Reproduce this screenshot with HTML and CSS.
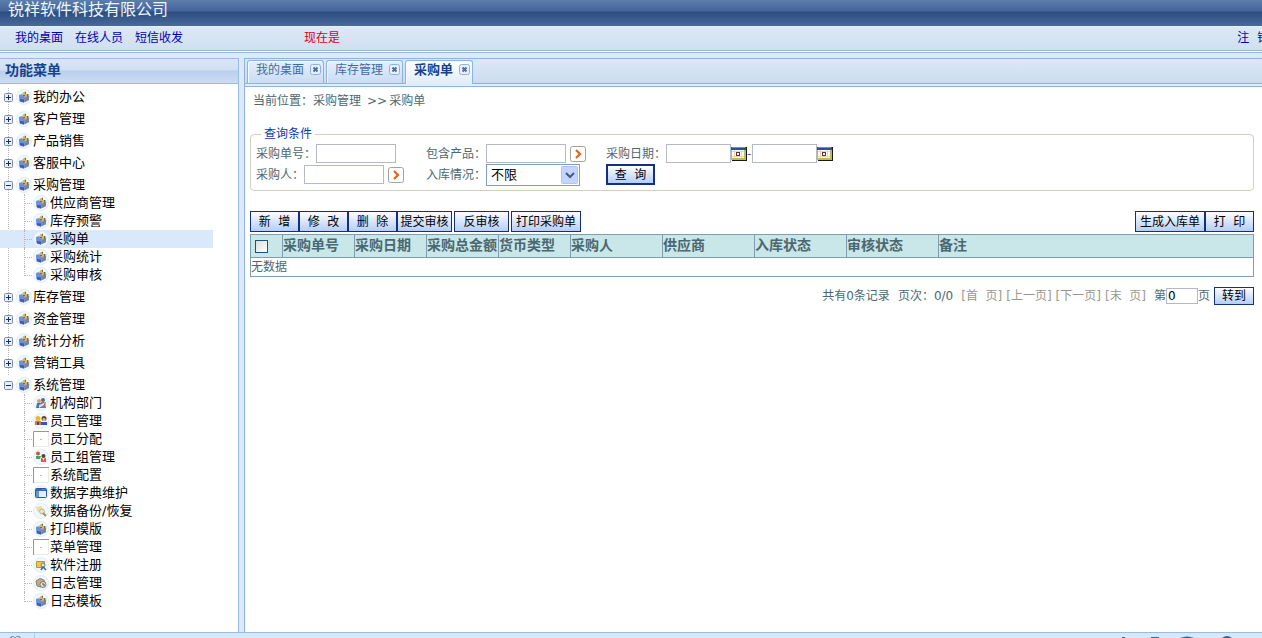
FILE: index.html
```html
<!DOCTYPE html>
<html lang="zh-CN">
<head>
<meta charset="utf-8">
<title>锐祥软件科技有限公司</title>
<link rel="stylesheet" href="styles.css">
</head>
<body>
<svg class="sprite" aria-hidden="true">
  <symbol id="folder" viewBox="0 0 16 16">
    <circle cx="8" cy="8" r="7.500" fill="#f0f8fe" stroke="#dceefb"/>
    <path d="M3 6l3-1 1 1 6-1v6l-5 2.500-4-.5z" fill="#8390b5"/>
    <path d="M3 6l5 1v6.500L3.500 12z" fill="#6f8fd6"/>
    <path d="M4 10l4 .5v3L4 12z" fill="#3f59ad"/>
    <path d="M7 3.500L9 2.500h1V5h3l.5 3L12 9V7h-1l-1 2-2-2-2-1z" fill="#cdb768"/>
    <path d="M9 3h1v2H9zM11 5h1v4h-1zM7 6h2v1H7z" fill="#756a52"/>
    <path d="M9 9l4-2v4l-4 2z" fill="#7883a8"/>
  </symbol>
  <symbol id="plus" viewBox="0 0 9 9">
    <rect x=".5" y=".5" width="8" height="8" rx="1" fill="#e9edf4" stroke="#7b8ba8"/>
    <path d="M2 4.500h5M4.500 2v5" stroke="#1c2f59"/>
  </symbol>
  <symbol id="minus" viewBox="0 0 9 9">
    <rect x=".5" y=".5" width="8" height="8" rx="1" fill="#e9edf4" stroke="#7b8ba8"/>
    <path d="M2 4.500h5" stroke="#1c2f59"/>
  </symbol>
  <symbol id="blank" viewBox="0 0 16 16">
    <path d="M0 0h16v16H0z" fill="#fff"/>
    <path d="M.5 16V.5H16" fill="none" stroke="#9a988c"/>
    <path d="M1 15.500h14.500V1" fill="none" stroke="#ece9df"/>
    <path d="M7 8h2v1H7z" fill="#bbb"/>
  </symbol>
  <symbol id="dept" viewBox="0 0 16 16">
    <circle cx="8" cy="8" r="7.500" fill="#f0f8fe" stroke="#dceefb"/>
    <path d="M4 8h5v5H3z" fill="#4870bd"/><circle cx="6" cy="6" r="2" fill="#d3a060"/>
    <path d="M8 7h4l1 6H8z" fill="#8a7185"/><circle cx="10" cy="5" r="2" fill="#5b688c"/>
    <path d="M6 10l5-2v2l-5 3z" fill="#dbe1ed"/><path d="M11 7h2v2h-2z" fill="#d8a04c"/>
  </symbol>
  <symbol id="staff" viewBox="0 0 16 16">
    <circle cx="8" cy="8" r="7.500" fill="#f0f8fe" stroke="#dceefb"/>
    <circle cx="5" cy="5.500" r="2.500" fill="#efb92b"/><path d="M2 8h6v4H2z" fill="#d38325"/>
    <circle cx="11" cy="5.500" r="2.500" fill="#5f472f"/><circle cx="11" cy="6.500" r="1.500" fill="#e8bd84"/>
    <path d="M8 9h6v3H8z" fill="#2f56ba"/><path d="M4 9h2v3H4z" fill="#414a8c"/>
  </symbol>
  <symbol id="group" viewBox="0 0 16 16">
    <circle cx="8" cy="8" r="7.500" fill="#f0f8fe" stroke="#dceefb"/>
    <circle cx="5" cy="4.500" r="2" fill="#d9503b"/><path d="M3 7h5l-1 3H3z" fill="#45a35d"/>
    <circle cx="10.500" cy="7" r="2" fill="#564339"/><path d="M8 9h5v4H8z" fill="#dc5549"/>
    <path d="M9.500 9h2l-1 3z" fill="#fff"/>
  </symbol>
  <symbol id="window" viewBox="0 0 16 16">
    <circle cx="8" cy="8" r="7.500" fill="#f0f8fe" stroke="#dceefb"/>
    <rect x="2.500" y="3.500" width="11" height="9" rx="1" fill="#e5effb" stroke="#31539b"/>
    <path d="M3 4h10v2H3z" fill="#3f67b5"/><path d="M9 4h3v1H9z" fill="#d5665a"/><path d="M3 6h3v6H3z" fill="#6f92d3"/>
  </symbol>
  <symbol id="backup" viewBox="0 0 16 16">
    <circle cx="8" cy="8" r="7.500" fill="#f0f8fe" stroke="#dceefb"/>
    <path d="M3 4l5-1 3 4-3 3-4-2z" fill="#efdc9c"/><circle cx="9" cy="8.500" r="2.500" fill="#e7e3d5" stroke="#bdb59b"/>
    <path d="M10 10l3 3" stroke="#b98c4c" stroke-width="2"/>
  </symbol>
  <symbol id="register" viewBox="0 0 16 16">
    <circle cx="8" cy="8" r="7.500" fill="#f0f8fe" stroke="#dceefb"/>
    <path d="M3.500 4.500h8v6h-8z" fill="#ecca3b" stroke="#b8982c"/><circle cx="10" cy="8" r="2" fill="#dce7f3" stroke="#607ba5"/>
    <path d="M10 10l3 3M10 10l-2 3" stroke="#41669c" stroke-width="1.500"/>
  </symbol>
  <symbol id="log" viewBox="0 0 16 16">
    <circle cx="8" cy="8" r="7.500" fill="#f0f8fe" stroke="#dceefb"/>
    <path d="M3 6l4-2.500L11 5l1 3-4 4-4-1z" fill="#c3ad83" stroke="#8c7f69"/>
    <circle cx="10" cy="9.500" r="3" fill="#ece7d9" stroke="#77736d"/><path d="M10 8v2h2" fill="none" stroke="#484848"/>
  </symbol>
  <symbol id="close" viewBox="0 0 11 11">
    <rect x=".5" y=".5" width="10" height="10" rx="2" fill="#e7f0fb" stroke="#91b0d9"/>
    <path d="M3.500 3.500l4 4M7.500 3.500l-4 4" stroke="#4c6f9f" stroke-width="2"/>
  </symbol>
  <symbol id="pick" viewBox="0 0 16 16">
    <rect x=".5" y=".5" width="15" height="15" rx="2" fill="#fff" stroke="#a9a396"/>
    <path d="M6 4l4 4-4 4" fill="none" stroke="#e5621c" stroke-width="2.200"/>
  </symbol>
  <symbol id="calendar" viewBox="0 0 16 16">
    <path d="M1 1h15v14H1z" fill="#1a1a12"/>
    <path d="M0 1h15v13H0z" fill="#c4b95a"/>
    <path d="M1 4h12v8H1z" fill="#fffdf0"/>
    <path d="M0 1h15v3H0z" fill="#27519f"/><path d="M1 1h13v1H1z" fill="#6a8fd0"/>
    <path d="M3.500 4v8M10.500 4v8M1 5.500h12M1 10.500h12" stroke="#ead9ac"/>
    <rect x="5.500" y="6.500" width="3" height="3" fill="#fff" stroke="#7b2741"/>
  </symbol>
</svg>

<header class="banner"><h1 class="banner-title">锐祥软件科技有限公司</h1></header>
<nav class="topnav">
  <a href="#">我的桌面</a>
  <a href="#">在线人员</a>
  <a href="#">短信收发</a>
  <span class="clock">现在是</span>
  <a class="logout" href="#">注&nbsp; 销</a>
</nav>

<div class="workspace">
  <aside class="sidebar">
    <h2 class="sidebar-title">功能菜单</h2>
    <ul class="tree">
      <li><a class="node" href="#"><svg class="toggle"><use href="#plus"/></svg><svg class="icon"><use href="#folder"/></svg>我的办公</a></li>
      <li><a class="node" href="#"><svg class="toggle"><use href="#plus"/></svg><svg class="icon"><use href="#folder"/></svg>客户管理</a></li>
      <li><a class="node" href="#"><svg class="toggle"><use href="#plus"/></svg><svg class="icon"><use href="#folder"/></svg>产品销售</a></li>
      <li><a class="node" href="#"><svg class="toggle"><use href="#plus"/></svg><svg class="icon"><use href="#folder"/></svg>客服中心</a></li>
      <li><a class="node" href="#"><svg class="toggle"><use href="#minus"/></svg><svg class="icon"><use href="#folder"/></svg>采购管理</a>
        <ul class="branch">
          <li><a class="leaf" href="#"><svg class="icon"><use href="#folder"/></svg>供应商管理</a></li>
          <li><a class="leaf" href="#"><svg class="icon"><use href="#folder"/></svg>库存预警</a></li>
          <li><a class="leaf selected" href="#"><svg class="icon"><use href="#folder"/></svg>采购单</a></li>
          <li><a class="leaf" href="#"><svg class="icon"><use href="#folder"/></svg>采购统计</a></li>
          <li><a class="leaf" href="#"><svg class="icon"><use href="#folder"/></svg>采购审核</a></li>
        </ul>
      </li>
      <li><a class="node" href="#"><svg class="toggle"><use href="#plus"/></svg><svg class="icon"><use href="#folder"/></svg>库存管理</a></li>
      <li><a class="node" href="#"><svg class="toggle"><use href="#plus"/></svg><svg class="icon"><use href="#folder"/></svg>资金管理</a></li>
      <li><a class="node" href="#"><svg class="toggle"><use href="#plus"/></svg><svg class="icon"><use href="#folder"/></svg>统计分析</a></li>
      <li><a class="node" href="#"><svg class="toggle"><use href="#plus"/></svg><svg class="icon"><use href="#folder"/></svg>营销工具</a></li>
      <li><a class="node" href="#"><svg class="toggle"><use href="#minus"/></svg><svg class="icon"><use href="#folder"/></svg>系统管理</a>
        <ul class="branch">
          <li><a class="leaf" href="#"><svg class="icon"><use href="#dept"/></svg>机构部门</a></li>
          <li><a class="leaf" href="#"><svg class="icon"><use href="#staff"/></svg>员工管理</a></li>
          <li><a class="leaf" href="#"><svg class="icon"><use href="#blank"/></svg>员工分配</a></li>
          <li><a class="leaf" href="#"><svg class="icon"><use href="#group"/></svg>员工组管理</a></li>
          <li><a class="leaf" href="#"><svg class="icon"><use href="#blank"/></svg>系统配置</a></li>
          <li><a class="leaf" href="#"><svg class="icon"><use href="#window"/></svg>数据字典维护</a></li>
          <li><a class="leaf" href="#"><svg class="icon"><use href="#backup"/></svg>数据备份/恢复</a></li>
          <li><a class="leaf" href="#"><svg class="icon"><use href="#folder"/></svg>打印模版</a></li>
          <li><a class="leaf" href="#"><svg class="icon"><use href="#blank"/></svg>菜单管理</a></li>
          <li><a class="leaf" href="#"><svg class="icon"><use href="#register"/></svg>软件注册</a></li>
          <li><a class="leaf" href="#"><svg class="icon"><use href="#log"/></svg>日志管理</a></li>
          <li><a class="leaf" href="#"><svg class="icon"><use href="#folder"/></svg>日志模板</a></li>
        </ul>
      </li>
    </ul>
  </aside>

  <main class="main">
    <div class="tabs">
      <div class="tab"><a href="#">我的桌面</a><button class="tab-close" type="button" aria-label="关闭"><svg><use href="#close"/></svg></button></div>
      <div class="tab"><a href="#">库存管理</a><button class="tab-close" type="button" aria-label="关闭"><svg><use href="#close"/></svg></button></div>
      <div class="tab active"><a href="#">采购单</a><button class="tab-close" type="button" aria-label="关闭"><svg><use href="#close"/></svg></button></div>
    </div>
    <div class="content">
      <div class="crumbs"><span>当前位置<span class="colon">：</span>采购管理</span><span>&gt;&gt;</span><span class="here">采购单</span></div>

      <form>
        <fieldset class="query">
          <legend>查询条件</legend>
          <div class="fields">
            <div class="field"><label for="no">采购单号<span class="colon">：</span></label><input class="text" id="no" type="text"></div>
            <div class="field"><label for="product">包含产品<span class="colon">：</span></label><input class="text" id="product" type="text"><button class="pick" type="button" aria-label="选择产品"><svg><use href="#pick"/></svg></button></div>
            <div class="field"><label for="from">采购日期<span class="colon">：</span></label><input class="text date" id="from" type="text"><button class="cal" type="button" aria-label="选择开始日期"><svg><use href="#calendar"/></svg></button><span class="dash">-</span><input class="text date" type="text" aria-label="结束日期"><button class="cal" type="button" aria-label="选择结束日期"><svg><use href="#calendar"/></svg></button></div>
            <div class="field"><label for="buyer">采购人<span class="colon">：</span></label><input class="text" id="buyer" type="text"><button class="pick" type="button" aria-label="选择采购人"><svg><use href="#pick"/></svg></button></div>
            <div class="field"><label for="stock">入库情况<span class="colon">：</span></label><span class="select-wrap"><select id="stock"><option>不限</option></select><svg class="select-arrow" viewBox="0 0 17 18"><rect x=".5" y=".5" width="16" height="17" rx="1" fill="#c3d5fc" stroke="#aec4f2"/><path d="M5 7l4 4 4-4" fill="none" stroke="#42598e" stroke-width="2"/></svg></span></div>
            <div class="field"><button class="btn search" type="button">查&nbsp; 询</button></div>
          </div>
        </fieldset>
      </form>

      <div class="toolbar">
        <button class="btn short" type="button">新&nbsp; 增</button>
        <button class="btn short" type="button">修&nbsp; 改</button>
        <button class="btn short" type="button">删&nbsp; 除</button>
        <button class="btn medium" type="button">提交审核</button>
        <button class="btn medium spaced" type="button">反审核</button>
        <button class="btn long spaced" type="button">打印采购单</button>
        <button class="btn long push" type="button">生成入库单</button>
        <button class="btn short" type="button">打&nbsp; 印</button>
      </div>

      <table class="grid">
        <colgroup><col class="c-check"><col class="c-a"><col class="c-a"><col class="c-a"><col class="c-a"><col class="c-b"><col class="c-b"><col class="c-b"><col class="c-b"><col></colgroup>
        <thead><tr><th class="check"><input type="checkbox" aria-label="全选"></th><th>采购单号</th><th>采购日期</th><th>采购总金额</th><th>货币类型</th><th>采购人</th><th>供应商</th><th>入库状态</th><th>审核状态</th><th>备注</th></tr></thead>
        <tbody><tr><td colspan="10">无数据</td></tr></tbody>
      </table>

      <div class="pager">
        <span class="total">共有0条记录</span>
        <span class="total">页次<span class="colon">：</span>0/0</span>
        <a href="#">[首&nbsp; 页]</a>
        <a href="#">[上一页]</a>
        <a href="#">[下一页]</a>
        <a href="#">[末&nbsp; 页]</a>
        <span class="goto"><label for="page">第</label><input class="text page" id="page" type="text" value="0">页</span>
        <button class="btn go" type="button">转到</button>
      </div>
    </div>
  </main>
</div>

<footer class="status">
  <svg class="status-left" viewBox="0 0 34 5"><path d="M11 3h3v1h-3zM16 3h4v1h-4zM10 4h2v1h-2zM14 4h2v1h-2zM19 4h2v1h-2z" fill="#7f98b8"/></svg>
  <svg class="status-right" viewBox="0 0 144 5"><path d="M4 4h3v1H4zM33 4h8v1h-8zM62 5q7-3 14 0zM104 5q5-4 10 0z" fill="#3f6297"/></svg>
</footer>
</body>
</html>
```

FILE: styles.css
```css
* { box-sizing: border-box; }

body {
  display: flex;
  flex-direction: column;
  height: 100vh;
  margin: 0;
  overflow: hidden;
  background: #dfe8f6;
  color: #4b6870;
  font: 12px/18px "DejaVu Sans", "Noto Sans CJK SC", sans-serif;
}

a { color: inherit; text-decoration: none; }
ul { margin: 0; padding: 0; list-style: none; }
svg { display: block; flex: none; }
button, input, select { font: inherit; }
button { flex: none; padding: 0; white-space: nowrap; }
.sprite { position: absolute; width: 0; height: 0; }
.colon { font-family: "Noto Sans CJK TC", sans-serif; line-height: 1; }

/* Banner and top links */
.banner {
  flex: none;
  height: 26px;
  padding: 0 8px;
  background: linear-gradient(#5d7dac, #43659a 11px, #2c4d80 12px, #49699a);
}
.banner-title { margin: 0; color: #eef7fb; font-size: 16px; font-weight: 400; line-height: 20px; }

.topnav {
  display: flex;
  flex: none;
  align-items: center;
  gap: 12px;
  height: 27px;
  padding: 0 0 3px 15px;
  overflow: hidden;
  border-top: 1px solid #e6f0fa;
  border-bottom: 1px solid #99b4da;
  background: linear-gradient(#dce8f5, #d0dff0 23px, #99b4da 23px, #99b4da 24px, #fff 24px);
  color: #0000b4;
  white-space: nowrap;
}
.clock { margin-left: 109px; color: #e00010; }
.logout { margin: 0 -7px 0 auto; }

/* Sidebar */
.workspace { display: flex; flex: 1; gap: 5px; min-height: 0; padding-top: 5px; }
.sidebar {
  display: flex;
  flex: none;
  flex-direction: column;
  width: 239px;
  border: solid #99bbe8;
  border-width: 1px 1px 0 0;
  background: #fff;
}
.sidebar-title {
  flex: none;
  height: 25px;
  margin: 0;
  padding-left: 5px;
  border-bottom: 1px solid #99bbe8;
  background: linear-gradient(#dae7f6, #cfdff3 11px, #b9cfee 12px, #ccddf3);
  color: #15428b;
  font-size: 14px;
  line-height: 22px;
}
.tree { padding-top: 4px; color: #000; font-size: 13px; }
.tree > li { padding-bottom: 4px; }
.tree > li:not(:last-child) {
  background: repeating-linear-gradient(#b5b5b5 0 1px, transparent 1px 2px) 8px 0 / 1px 100% no-repeat;
}
.node, .leaf { display: flex; align-items: center; height: 18px; white-space: nowrap; }
.node { gap: 1px; padding-left: 4px; }
.toggle { width: 9px; height: 9px; margin-right: 2px; }
.icon { width: 16px; height: 16px; }
.leaf { gap: 1px; margin-right: 25px; padding-left: 24px; }
.leaf::before {
  align-self: stretch;
  width: 8px;
  margin-right: -1px;
  border-left: 1px dotted #b5b5b5;
  background: repeating-linear-gradient(90deg, #b5b5b5 0 1px, transparent 1px 2px) 0 9px / 7px 1px no-repeat;
  content: "";
}
.branch li:last-child .leaf::before { align-self: flex-start; height: 10px; }
.selected { background: #d9e8fb; }

/* Tabs */
.main {
  display: flex;
  flex: 1;
  flex-direction: column;
  min-width: 0;
  border: solid #8db2e3;
  border-width: 1px 0 0 1px;
  background: #fff;
}
.tabs {
  display: flex;
  flex: none;
  gap: 2px;
  height: 28px;
  padding: 1px 0 3px 2px;
  border-bottom: 1px solid #8db2e3;
  background: linear-gradient(#dce8f7, #cbdbef 24px, #8db2e3 24px, #8db2e3 25px, #deecfd 25px);
}
.tab {
  display: flex;
  align-items: flex-start;
  gap: 6px;
  height: 23px;
  padding: 0 2px 0 8px;
  border: 1px solid #8db2e3;
  border-bottom: 0;
  border-radius: 3px 3px 0 0;
  background: linear-gradient(#e5effb, #c9dcf4);
  box-shadow: inset 1px 1px #f4f9ff;
  color: #416aa3;
}
.tab.active { height: 24px; background: linear-gradient(#fff, #deecfd); color: #15428b; font-size: 13px; font-weight: 700; }
.tab-close { width: 11px; height: 11px; margin-top: 3px; border: 0; background: none; }
.tab-close svg { width: 11px; height: 11px; }

/* Page content */
.content { padding: 5px 8px 0 5px; }
.crumbs { display: flex; gap: 6px; height: 18px; padding-left: 3px; }
.here { margin-left: -4px; }

.query {
  min-width: 0;
  margin: 15px 0 0;
  padding: 0 5px 5px;
  border: 1px solid #d0d0bf;
  border-radius: 4px;
}
.query legend { margin-left: 5px; padding: 0 3px; color: #0a3cab; }
.fields { display: grid; grid-template-columns: 170px 180px 1fr; grid-auto-rows: 21px; }
.field { display: flex; align-items: center; white-space: nowrap; }
.text { width: 80px; height: 19px; padding: 0 2px; border: 1px solid #b5b8c8; background: #fff; }
.date { width: 65px; }
.pick, .cal { width: 16px; height: 16px; border: 0; background: none; }
.pick { margin-left: 4px; }
.pick svg, .cal svg { width: 16px; height: 16px; }
.dash { width: 5px; }
.select-wrap { position: relative; }
.select-wrap select {
  display: block;
  width: 94px;
  height: 22px;
  padding: 0 4px;
  appearance: none;
  border: 1px solid #7f9db9;
  border-radius: 0;
  background: #fff;
  color: #000;
  font-size: 13px;
}
.select-arrow { position: absolute; top: 2px; right: 2px; width: 17px; height: 18px; pointer-events: none; }

.btn {
  height: 21px;
  border: 1px solid #12307c;
  border-radius: 0;
  background: linear-gradient(#fdfeff, #b4cdf8);
  color: #000;
  line-height: 18px;
}
.search { width: 49px; border-width: 2px; line-height: 16px; }
.short { width: 49px; }
.medium { width: 55px; }
.long { width: 70px; }
.spaced { margin-left: 2px; }
.push { margin-left: auto; }
.toolbar { display: flex; margin: 20px 0 2px; }

.grid { width: 100%; table-layout: fixed; border-collapse: collapse; border: 1px solid #7f9db0; }
.grid th, .grid td { padding: 0; text-align: left; white-space: nowrap; }
.grid th { height: 23px; padding-bottom: 3px; border: 1px solid #7f9db0; background: #c9e6e9; font-size: 14px; }
.grid td { height: 19px; }
.c-check { width: 32px; }
.c-a { width: 72px; }
.c-b { width: 92px; }
.grid .check { padding: 1px 0 0 4px; }
.check input {
  display: block;
  width: 13px;
  height: 13px;
  margin: 0;
  appearance: none;
  border: 1px solid #1c5180;
  background: linear-gradient(135deg, #dcdcd7, #fff);
}

.pager { display: flex; align-items: center; justify-content: flex-end; gap: 4px; margin-top: 10px; white-space: nowrap; }
.pager a { color: #999888; }
.total { margin-right: 4px; }
.goto { display: flex; align-items: center; margin-left: 4px; }
.page { width: 32px; height: 16px; padding: 0 1px; }
.go { width: 40px; height: 18px; line-height: 16px; }

/* Status bar */
.status {
  display: flex;
  flex: none;
  justify-content: space-between;
  height: 6px;
  border-top: 1px solid #99bbe8;
  background: #d6e8fa;
}
.status-left { width: 35px; height: 5px; border-right: 1px solid #b3cde9; }
.status-right { width: 144px; height: 5px; }
```
